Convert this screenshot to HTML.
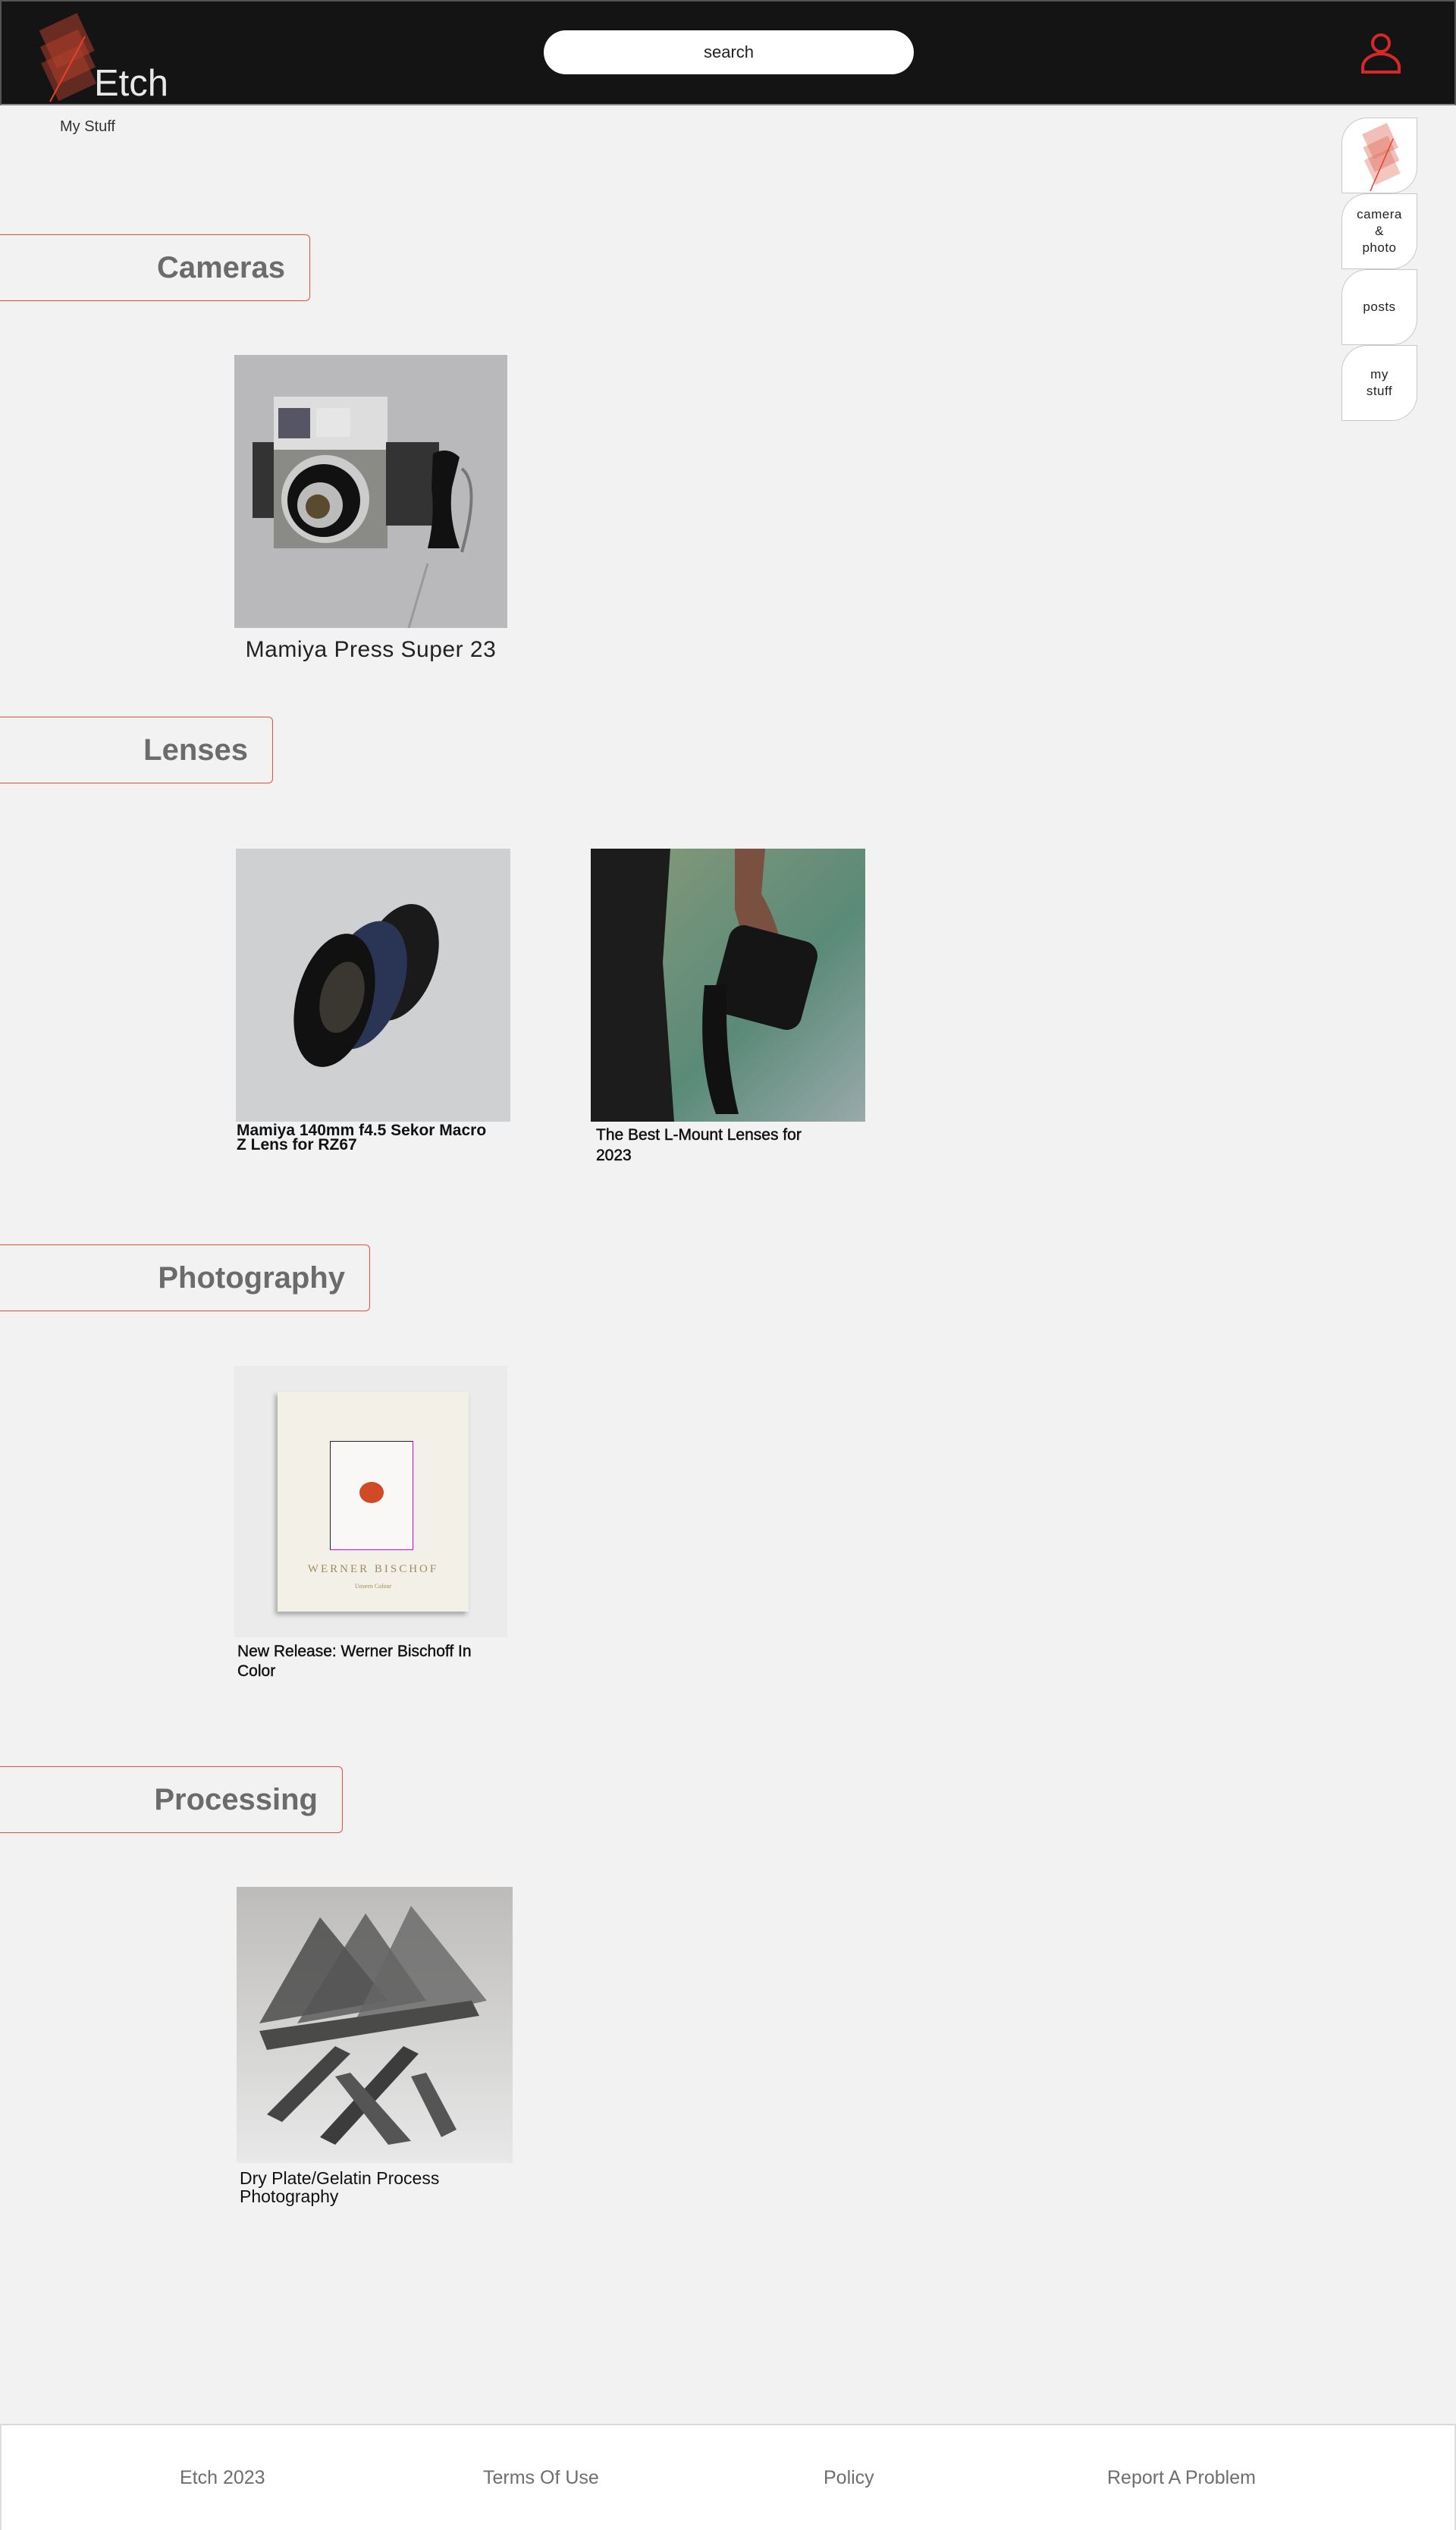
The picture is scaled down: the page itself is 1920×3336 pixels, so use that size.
<!DOCTYPE html>
<html><head><meta charset="utf-8"><style>
*{margin:0;padding:0;box-sizing:border-box}
body{width:1920px;height:3336px;background:#f2f2f2;font-family:"Liberation Sans",sans-serif;position:relative;overflow:hidden}
.a{position:absolute}
.hdr{left:0;top:0;width:1920px;height:139px;background:#141414;border:2px solid #555;border-bottom:2px solid #888}
.search{left:717px;top:40px;width:488px;height:58px;background:#fff;border-radius:29px;text-align:center;line-height:58px;font-size:22px;color:#222}
.sec{left:-2px;height:88px;border:1.5px solid #e8503a;border-left:none;border-radius:0 6px 6px 0;text-align:right;padding-right:32px;font-size:40px;font-weight:bold;color:#6b6b6b;line-height:86px}
.side{left:1769px;width:100px;height:100px;background:#fff;border:1.5px solid #c8c8c8;border-radius:34px 0 34px 0;text-align:center;font-size:17px;color:#222;display:flex;align-items:center;justify-content:center;line-height:22px;letter-spacing:.5px}
.cap{font-size:21px;font-weight:bold;color:#111;line-height:19px}
.foot{left:0;top:3196px;width:1920px;height:140px;background:#fff;border-top:2px solid #d8d8d8;border-left:2px solid #ddd;border-right:2px solid #ddd}
.ft{top:3253px;font-size:25px;color:#6e6e6e}
</style></head><body>
<div class="a hdr"></div>
<svg class="a" style="left:40px;top:8px" width="110" height="130" viewBox="0 0 110 130">
<g transform="rotate(-25 60 65)">
<rect x="30" y="15" width="55" height="55" fill="#b0402c" opacity=".55"/>
<rect x="22" y="35" width="55" height="55" fill="#b0402c" opacity=".55"/>
<rect x="14" y="55" width="55" height="55" fill="#b0402c" opacity=".5"/>
</g>
<line x1="72" y1="40" x2="26" y2="126" stroke="#e8402c" stroke-width="2"/>
</svg>
<div class="a" style="left:124px;top:82px;font-size:49px;color:#e8e8e8;font-weight:300">Etch</div>
<div class="a search">search</div>
<svg class="a" style="left:1793px;top:42px" width="56" height="56" viewBox="0 0 56 56" fill="none" stroke="#d62828" stroke-width="4">
<circle cx="28" cy="15" r="11"/>
<path d="M4 53 V47 A24 18 0 0 1 52 47 V53 Z"/>
</svg>
<div class="a" style="left:79px;top:156px;font-size:20px;color:#333">My Stuff</div>

<div class="a side" style="top:155px"><svg width="80" height="96" viewBox="0 0 80 96"><g transform="rotate(-25 42 45)"><rect x="30" y="12" width="36" height="36" fill="#e07060" opacity=".45"/><rect x="24" y="28" width="36" height="36" fill="#e07060" opacity=".45"/><rect x="18" y="44" width="36" height="36" fill="#e07060" opacity=".4"/></g><line x1="58" y1="26" x2="28" y2="95" stroke="#e04030" stroke-width="1.5"/></svg></div>
<div class="a side" style="top:255px">camera<br>&amp;<br>photo</div>
<div class="a side" style="top:355px">posts</div>
<div class="a side" style="top:455px">my<br>stuff</div>

<div class="a sec" style="top:309px;width:411px">Cameras</div>
<svg class="a" style="left:309px;top:468px" width="360" height="360" viewBox="0 0 360 360">
<rect width="360" height="360" fill="#b9b9bb"/>
<rect x="24" y="115" width="34" height="100" fill="#333"/>
<rect x="52" y="55" width="150" height="200" fill="#8a8a86"/>
<rect x="52" y="55" width="150" height="70" fill="#ddd"/>
<rect x="58" y="70" width="42" height="40" fill="#556"/>
<rect x="108" y="70" width="45" height="38" fill="#e6e6e6"/>
<circle cx="120" cy="190" r="58" fill="#ccc"/>
<circle cx="118" cy="192" r="48" fill="#111"/>
<circle cx="113" cy="198" r="30" fill="#bbb"/>
<circle cx="110" cy="200" r="16" fill="#5a4a30"/>
<rect x="200" y="115" width="70" height="110" fill="#333"/>
<path d="M262 130 q20 -10 35 5 l-10 40 q-5 40 10 80 h-42 q10 -40 5 -80z" fill="#111"/>
<path d="M300 150 q25 20 0 110" stroke="#777" stroke-width="4" fill="none"/>
<line x1="255" y1="275" x2="230" y2="360" stroke="#999" stroke-width="3"/>
</svg>
<div class="a" style="left:309px;top:840px;width:360px;text-align:center;font-size:30px;color:#222;letter-spacing:.5px">Mamiya Press Super 23</div>

<div class="a sec" style="top:945px;width:362px">Lenses</div>
<svg class="a" style="left:311px;top:1119px" width="362" height="360" viewBox="0 0 362 360">
<rect width="362" height="360" fill="#cfd0d2"/>
<ellipse cx="215" cy="150" rx="48" ry="80" fill="#1a1a1a" transform="rotate(20 215 150)"/>
<ellipse cx="170" cy="180" rx="50" ry="88" fill="#2a3555" transform="rotate(20 170 180)"/>
<ellipse cx="130" cy="200" rx="50" ry="90" fill="#111" transform="rotate(15 130 200)"/>
<ellipse cx="140" cy="196" rx="28" ry="48" fill="#3a3630" transform="rotate(15 140 196)"/>
</svg>
<div class="a cap" style="left:312px;top:1481px;width:345px">Mamiya 140mm f4.5 Sekor Macro Z Lens for RZ67</div>
<svg class="a" style="left:779px;top:1119px" width="362" height="360" viewBox="0 0 362 360">
<defs><linearGradient id="g" x1="0" y1="0" x2="1" y2="1"><stop offset="0" stop-color="#8a9a7a"/><stop offset=".6" stop-color="#5a8a78"/><stop offset="1" stop-color="#9aa"/></linearGradient></defs>
<rect width="362" height="360" fill="url(#g)"/>
<path d="M0 0 H105 L95 150 L110 360 H0 Z" fill="#1c1c1c"/>
<path d="M190 0 h40 l-5 60 q30 50 30 110 h-40 l-25 -90z" fill="#7a5040"/>
<rect x="170" y="110" width="120" height="120" rx="20" fill="#151515" transform="rotate(15 230 170)"/>
<path d="M150 180 q-10 100 15 170 h30 q-20 -80 -15 -170z" fill="#111"/>
</svg>
<div class="a cap" style="left:786px;top:1483px;width:300px;line-height:27px;font-weight:normal;-webkit-text-stroke:.5px #111">The Best L-Mount Lenses for 2023</div>

<div class="a sec" style="top:1641px;width:490px">Photography</div>
<div class="a" style="left:309px;top:1801px;width:360px;height:358px;background:#ebebeb"></div>
<div class="a" style="left:366px;top:1835px;width:252px;height:290px;background:#f3f1e7;box-shadow:-3px 4px 6px rgba(0,0,0,.3)"></div>
<div class="a" style="left:435px;top:1900px;width:110px;height:144px;background:#faf8f6;border:1.5px solid #222;border-right-color:#e0e;border-bottom-color:#e0e"></div>
<div class="a" style="left:474px;top:1954px;width:32px;height:28px;border-radius:50%;background:#d04a26"></div>
<div class="a" style="left:366px;top:2061px;width:252px;text-align:center;font-family:'Liberation Serif',serif;font-size:15px;letter-spacing:3px;color:#a08a60">WERNER BISCHOF</div>
<div class="a" style="left:366px;top:2087px;width:252px;text-align:center;font-family:'Liberation Serif',serif;font-size:8px;color:#a08a60">Unseen Colour</div>
<div class="a cap" style="left:313px;top:2165px;width:340px;line-height:26px;font-weight:normal;-webkit-text-stroke:.4px #111">New Release: Werner Bischoff In Color</div>

<div class="a sec" style="top:2329px;width:454px">Processing</div>
<svg class="a" style="left:312px;top:2488px" width="364" height="364" viewBox="0 0 364 364">
<defs><linearGradient id="h" x1="0" y1="0" x2="0" y2="1"><stop offset="0" stop-color="#bdbcba"/><stop offset="1" stop-color="#e8e8e8"/></linearGradient></defs>
<rect width="364" height="364" fill="url(#h)"/>
<path d="M30 180 L110 40 L200 150 Z" fill="#444" opacity=".8"/>
<path d="M80 180 L170 35 L250 150 Z" fill="#555" opacity=".8"/>
<path d="M150 190 L230 25 L330 150 Z" fill="#666" opacity=".8"/>
<path d="M30 190 L310 150 L320 170 L40 215Z" fill="#4a4a48"/>
<path d="M40 300 L130 210 L150 220 L60 310Z" fill="#444"/>
<path d="M110 330 L220 210 L240 220 L130 340Z" fill="#3c3c3c"/>
<path d="M200 340 L130 250 L150 245 L230 335Z" fill="#555"/>
<path d="M270 330 L230 250 L250 245 L290 320Z" fill="#555"/>
</svg>
<div class="a" style="left:316px;top:2860px;width:360px;font-size:23px;color:#111;line-height:24px">Dry Plate/Gelatin Process Photography</div>

<div class="a foot"></div>
<div class="a ft" style="left:237px">Etch 2023</div>
<div class="a ft" style="left:637px">Terms Of Use</div>
<div class="a ft" style="left:1086px">Policy</div>
<div class="a ft" style="left:1460px">Report A Problem</div>
</body></html>
